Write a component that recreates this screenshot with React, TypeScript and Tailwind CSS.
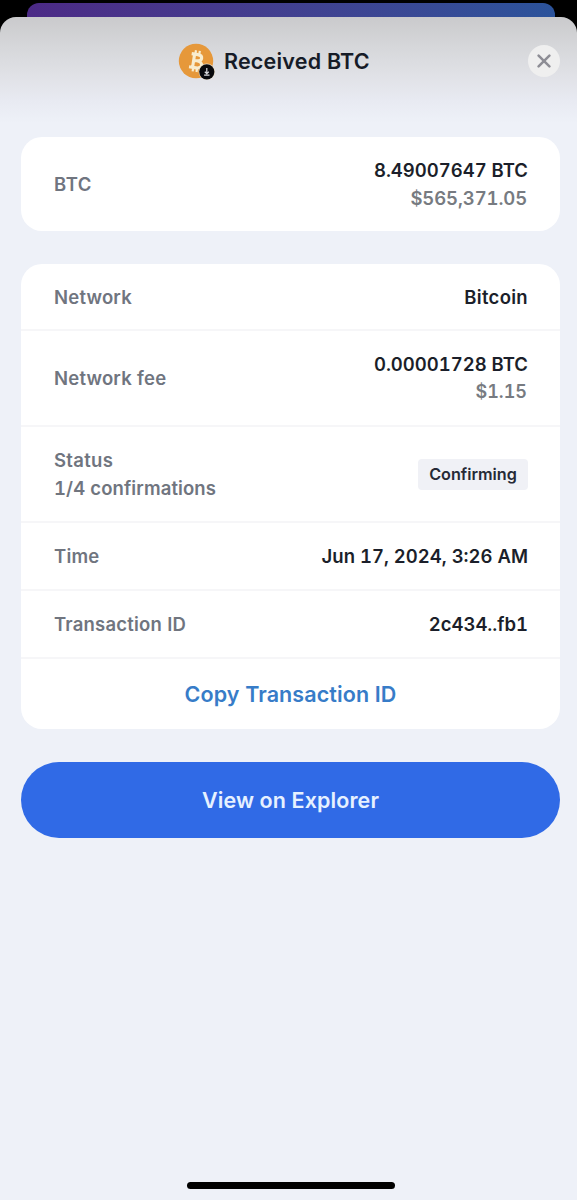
import type { ReactNode } from "react";

function BitcoinBadge() {
  return (
    <svg className="h-[37px] w-[37px] shrink-0" viewBox="0 0 37 37" fill="none" aria-hidden="true">
      <circle cx="18" cy="18" r="17.2" fill="#e6983a" />
      <g transform="rotate(9 18 18)" stroke="#f8edcf" strokeLinecap="butt" strokeLinejoin="round">
        <path d="M12.6 11.4H18.8C24.6 11.4 24.6 17.6 18.8 17.6H15.4M18.8 17.6C25.8 17.6 25.8 24.8 19 24.8H12M15.6 11.4V24.8" strokeWidth="3.1" />
        <path d="M16.3 7.4V12M20.2 7.4V12M16.3 24V28.8M20.2 24V28.8" strokeWidth="2.2" />
      </g>
      <circle cx="28.8" cy="28.8" r="8.2" fill="#e9dcc4" />
      <circle cx="28.8" cy="28.8" r="7.6" fill="#08090d" />
      <path d="M28.8 25V30.4M26.8 28.7L28.8 30.6L30.8 28.7M26.1 32.1H31.5" stroke="#dcdde0" strokeWidth="1.2" />
    </svg>
  );
}

function Row({ className, label, children }: { className: string; label: ReactNode; children: ReactNode }) {
  return (
    <div className={`flex items-center justify-between pr-[32px] pl-[33px] tabular-nums ${className}`}>
      <div className="text-[18.5px] leading-[28px] tracking-[0.2px] text-[#70757f]">{label}</div>
      <div className="flex flex-col items-end text-[18.5px] leading-[28px] text-[#1b1f2a]">{children}</div>
    </div>
  );
}

export default function App() {
  return (
    <div className="h-[1200px] w-full overflow-hidden bg-black pt-[3px] font-['Inter',sans-serif] font-semibold whitespace-nowrap">
      <div className="ml-[27px] h-[14px] w-[528px] rounded-t-[12px] bg-linear-to-r from-[#4c2a86] via-[#414090] to-[#2b539b]" />
      <main className="flex h-[1183px] flex-col rounded-t-[16px] bg-[#eef1f8] bg-[linear-gradient(180deg,#cacacc_0px,#d6d7da_30px,#e0e1e6_58px,#e8eaf2_84px,#eef1f8_106px)] pr-[17px] pl-[21px]">
        <header className="relative flex h-[88px] items-center">
          <div className="ml-[157px] flex items-center gap-[9px]">
            <BitcoinBadge />
            <h1 className="text-[21.5px] leading-[28px] tracking-[0.2px] text-[#161b27]">Received BTC</h1>
          </div>
          <button aria-label="Close" className="absolute top-[28px] right-0 flex h-[32px] w-[32px] items-center justify-center rounded-full bg-[#efefef]">
            <svg className="h-[14px] w-[14px]" viewBox="0 0 14 14" aria-hidden="true">
              <path d="M1.6 1.6L12.4 12.4M12.4 1.6L1.6 12.4" stroke="#8d8d95" strokeWidth="2.5" strokeLinecap="round" />
            </svg>
          </button>
        </header>

        <section className="mt-[32px] rounded-[21px] bg-white">
          <Row className="h-[94px]" label={<span className="tracking-[0.5px]">BTC</span>}>
            <span>8.49007647 BTC</span>
            <span className="pr-[1px] tracking-[-0.1px] text-[#777b81]">$565,371.05</span>
          </Row>
        </section>

        <section className="mt-[33px] h-[465px] divide-y-2 divide-[#f6f6f8] rounded-[21px] bg-white">
          <Row className="h-[67px]" label={<span>Network</span>}>
            <span className="tracking-[0.3px]">Bitcoin</span>
          </Row>
          <Row className="h-[96px]" label={<span>Network fee</span>}>
            <span>0.00001728 BTC</span>
            <span className="pr-[1px] text-[18px] text-[#777b81]">$1.15</span>
          </Row>
          <Row
            className="h-[96px]"
            label={
              <>
                <span className="block tracking-[0.3px]">Status</span>
                <span className="block tracking-[0.1px]">1/4 confirmations</span>
              </>
            }
          >
            <span className="flex h-[31px] w-[110px] items-center justify-center rounded-[4px] bg-[#f0f1f6] text-[16.2px] text-[#262a36]">
              Confirming
            </span>
          </Row>
          <Row className="h-[68px]" label={<span>Time</span>}>
            <span>Jun 17, 2024, 3:26 AM</span>
          </Row>
          <Row className="h-[68px]" label={<span>Transaction ID</span>}>
            <span>2c434..fb1</span>
          </Row>
          <button className="flex h-[70px] w-full items-center justify-center text-[21.5px] tracking-[0.1px] text-[#377cc8]">
            <span>Copy Transaction ID</span>
          </button>
        </section>

        <button className="mt-[33px] flex h-[76px] shrink-0 items-center justify-center rounded-full bg-[#306ae6] text-[21.5px] tracking-[0.1px] text-[#e6f1ff]">
          <span>View on Explorer</span>
        </button>

        <div className="mt-auto mb-[11px] ml-[166px] h-[7px] w-[208px] rounded-full bg-black" />
      </main>
    </div>
  );
}
